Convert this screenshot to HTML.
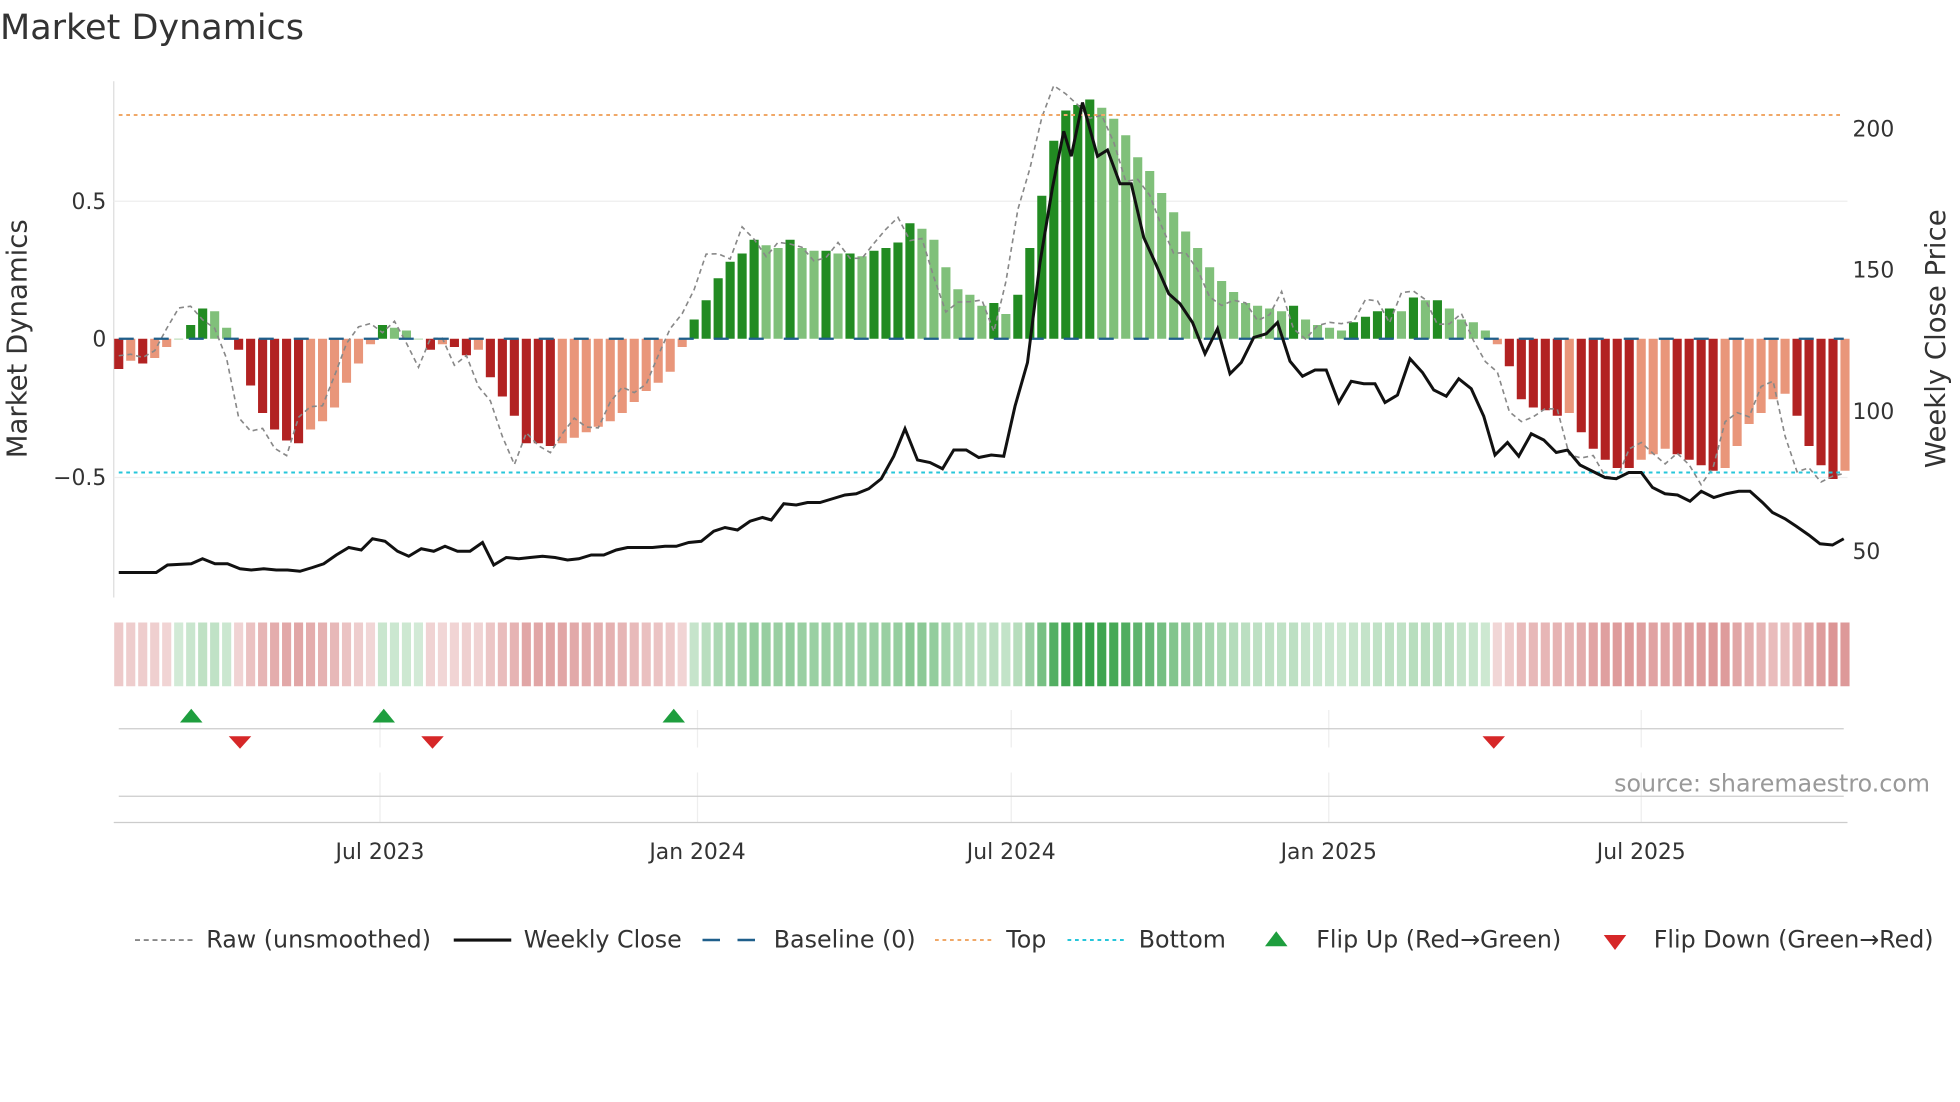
<!DOCTYPE html>
<html><head><meta charset="utf-8"><style>
html,body{margin:0;padding:0;background:#fff;}
svg{display:block;font-family:"DejaVu Sans","Liberation Sans",sans-serif;}
</style></head><body>
<svg id="s" width="1960" height="1102" viewBox="0 0 1568 881.6" xmlns="http://www.w3.org/2000/svg">
<rect width="1568" height="882" fill="#fff"/>
<text x="0" y="31" font-size="28" fill="#333">Market Dynamics</text>
<line x1="91" y1="65" x2="91" y2="478" stroke="#ddd"/>
<line x1="91" y1="161" x2="1478" y2="161" stroke="#eee"/>
<line x1="91" y1="382" x2="1478" y2="382" stroke="#eee"/>
<g id="bars"></g>
<g id="heat"></g>
<polyline id="raw" fill="none" stroke="#888" stroke-width="1.3" stroke-dasharray="4,3"/>
<line x1="95" y1="92" x2="1475" y2="92" stroke="#f0a868" stroke-width="1.6" stroke-dasharray="3,3"/>
<line x1="95" y1="378" x2="1475" y2="378" stroke="#26c6da" stroke-width="1.6" stroke-dasharray="3,3"/>
<line x1="95" y1="271" x2="1475" y2="271" stroke="#1f5f8b" stroke-width="1.8" stroke-dasharray="12,16"/>
<polyline id="price" fill="none" stroke="#111" stroke-width="2.4"/>
<g font-size="17.5" fill="#333">
<text x="85" y="167" text-anchor="end">0.5</text>
<text x="85" y="277" text-anchor="end">0</text>
<text x="85" y="388" text-anchor="end">−0.5</text>
<text x="1482" y="109">200</text>
<text x="1482" y="222">150</text>
<text x="1482" y="335">100</text>
<text x="1482" y="447">50</text>
<text transform="translate(21,271) rotate(-90)" text-anchor="middle" font-size="22">Market Dynamics</text>
<text transform="translate(1556,271) rotate(-90)" text-anchor="middle" font-size="22">Weekly Close Price</text>
</g>
<g stroke="#eee">
<line x1="304" y1="568" x2="304" y2="598"/><line x1="558" y1="568" x2="558" y2="598"/><line x1="809" y1="568" x2="809" y2="598"/><line x1="1063" y1="568" x2="1063" y2="598"/><line x1="1313" y1="568" x2="1313" y2="598"/>
<line x1="304" y1="618" x2="304" y2="658"/><line x1="558" y1="618" x2="558" y2="658"/><line x1="809" y1="618" x2="809" y2="658"/><line x1="1063" y1="618" x2="1063" y2="658"/><line x1="1313" y1="618" x2="1313" y2="658"/>
</g>
<line x1="95" y1="583" x2="1475" y2="583" stroke="#ccc"/>
<line x1="95" y1="637" x2="1475" y2="637" stroke="#ccc"/>
<line x1="91" y1="658" x2="1478" y2="658" stroke="#ccc"/>
<g fill="#1e9e3e"><polygon points="144,578 162,578 153,567"/><polygon points="298,578 316,578 307,567"/><polygon points="530,578 548,578 539,567"/></g>
<g fill="#d62728"><polygon points="183,589 201,589 192,599"/><polygon points="337,589 355,589 346,599"/><polygon points="1186,589 1204,589 1195,599"/></g>
<text x="1544" y="633" text-anchor="end" font-size="19" fill="#999">source: sharemaestro.com</text>
<g font-size="17.5" fill="#333" text-anchor="middle">
<text x="304" y="687">Jul 2023</text><text x="558" y="687">Jan 2024</text><text x="809" y="687">Jul 2024</text><text x="1063" y="687">Jan 2025</text><text x="1313" y="687">Jul 2025</text>
</g>
<g font-size="19" fill="#333">
<line x1="108" y1="752" x2="154" y2="752" stroke="#888" stroke-width="1.5" stroke-dasharray="4,3"/><text x="165" y="758">Raw (unsmoothed)</text>
<line x1="363" y1="752" x2="409" y2="752" stroke="#111" stroke-width="2.5"/><text x="419" y="758">Weekly Close</text>
<line x1="562" y1="752" x2="608" y2="752" stroke="#1f5f8b" stroke-width="2" stroke-dasharray="14,14"/><text x="619" y="758">Baseline (0)</text>
<line x1="748" y1="752" x2="794" y2="752" stroke="#f0a868" stroke-width="1.6" stroke-dasharray="3,3"/><text x="805" y="758">Top</text>
<line x1="854" y1="752" x2="900" y2="752" stroke="#26c6da" stroke-width="1.6" stroke-dasharray="3,3"/><text x="911" y="758">Bottom</text>
<polygon points="1012,757 1030,757 1021,745" fill="#1e9e3e"/><text x="1053" y="758">Flip Up (Red→Green)</text>
<polygon points="1283,748 1301,748 1292,760" fill="#d62728"/><text x="1323" y="758">Flip Down (Green→Red)</text>
</g>
</svg>
<script>
var v=[-0.11,-0.08,-0.09,-0.07,-0.03,0,0.05,0.11,0.1,0.04,-0.04,-0.17,-0.27,-0.33,-0.37,-0.38,-0.33,-0.3,-0.25,-0.16,-0.09,-0.02,0.05,0.04,0.03,0,-0.04,-0.02,-0.03,-0.06,-0.04,-0.14,-0.21,-0.28,-0.38,-0.38,-0.39,-0.38,-0.36,-0.34,-0.32,-0.3,-0.27,-0.23,-0.19,-0.16,-0.12,-0.03,
0.07,0.14,0.22,0.28,0.31,0.36,0.34,0.33,0.36,0.33,0.32,0.32,0.31,0.31,0.30,0.32,0.33,0.35,0.42,0.4,0.36,0.26,0.18,0.16,0.12,0.13,0.09,0.16,0.33,0.52,0.72,0.83,0.85,0.87,0.84,0.80,0.74,0.66,0.61,0.53,0.46,0.39,0.33,0.26,0.21,0.17,0.13,0.12,0.11,0.1,0.12,0.07,0.05,0.04,0.03,0.06,0.08,0.1,0.11,0.1,0.15,0.14,0.14,0.11,0.07,0.06,0.03,-0.02,-0.1,-0.22,-0.25,-0.26,-0.28,-0.27,-0.34,-0.40,-0.44,-0.47,-0.47,-0.44,-0.42,-0.40,-0.42,-0.44,-0.46,-0.48,-0.47,-0.39,-0.31,-0.27,-0.22,-0.2,-0.28,-0.39,-0.46,-0.51,-0.48];
var n=v.length,x0=95,x1=1476,dx=(x1-x0)/(n-1),z=271,k=220,ns="http://www.w3.org/2000/svg";
var B=document.getElementById('bars'),H=document.getElementById('heat'),raw=[];
function el(t,a,p){var e=document.createElementNS(ns,t);for(var q in a)e.setAttribute(q,a[q]);p.appendChild(e);}
for(var i=0;i<n;i++){var a=v[i],p=i?v[i-1]:0,dark=Math.abs(a)>=Math.abs(p),x=x0+i*dx-dx*0.38,w=dx*0.76;
var c=a>=0?(dark?'#228b22':'#80c07a'):(dark?'#b22222':'#e9967a');
var y=a>=0?z-a*k:z,h=Math.abs(a)*k;el('rect',{x:x,y:y,width:w,height:Math.max(h,0.5),fill:c},B);
var m=Math.min(1,Math.abs(a)/0.9),hc=a>=0?'rgba(30,150,50,'+(0.2+0.7*m)+')':'rgba(190,60,60,'+(0.2+0.6*m)+')';
el('rect',{x:x,y:498,width:w,height:51,fill:hc},H);
var nx=i<n-1?v[i+1]:a,r=a+(nx-a)*1.6+0.04*Math.sin(i*1.7);raw.push((x0+i*dx).toFixed(1)+','+(z-r*k).toFixed(1));}
document.getElementById('raw').setAttribute('points',raw.join(' '));
var P=[95,458,125,458,134,452,153,451,162,447,172,451,182,451,192,455,201,456,211,455,221,456,230,456,240,457,250,454,259,451,269,444,279,438,289,440,298,431,308,433,318,441,327,445,337,439,347,441,356,437,366,441,376,441,386,434,395,452,405,446,415,447,424,446,434,445,444,446,454,448,463,447,473,444,483,444,493,440,502,438,512,438,522,438,532,437,541,437,551,434,561,433,571,425,580,422,590,424,600,417,610,414,617,416,627,403,637,404,646,402,656,402,666,399,676,396,685,395,695,391,705,383,715,365,724,343,734,368,744,370,754,375,763,360,773,360,783,366,793,364,803,365,812,325,822,290,832,210,842,150,851,105,857,125,866,82,878,125,886,120,896,147,905,147,915,190,925,212,935,235,944,243,954,258,964,283,974,263,984,299,993,290,1003,270,1013,267,1022,258,1032,289,1042,301,1052,296,1061,296,1071,322,1081,305,1091,307,1100,307,1108,322,1118,316,1128,287,1138,298,1147,312,1157,317,1167,303,1177,311,1187,333,1196,364,1206,354,1215,365,1225,347,1235,352,1245,362,1254,360,1264,372,1274,377,1284,382,1293,383,1303,378,1313,378,1322,390,1332,395,1342,396,1352,401,1361,393,1371,398,1381,395,1391,393,1400,393,1410,402,1418,410,1428,415,1437,421,1447,428,1456,435,1466,436,1475,431];
var s=[];for(var j=0;j<P.length;j+=2)s.push(P[j]+','+P[j+1]);document.getElementById('price').setAttribute('points',s.join(' '));
</script>
</body></html>
